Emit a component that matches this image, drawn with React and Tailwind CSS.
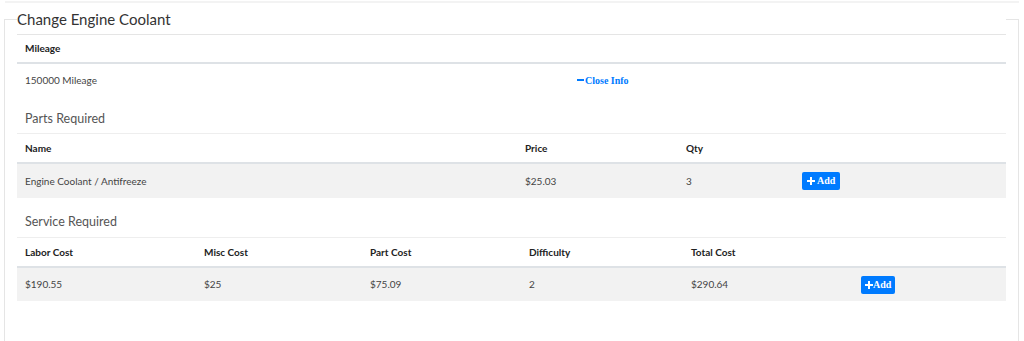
import React from 'react';

const parts = [{ name: 'Engine Coolant / Antifreeze', price: '$25.03', qty: '3' }];

const service = { labor: '$190.55', misc: '$25', part: '$75.09', difficulty: '2', total: '$290.64' };

const AddButton = ({ spaced }) => (
  <button className={`h-[18px] rounded-[2px] bg-[#007bff] text-white flex items-center font-['Liberation_Serif',serif] font-bold text-[10px] leading-none ${spaced ? 'px-[5px]' : 'px-[4px]'}`}>
    <svg width="8" height="8" viewBox="0 0 8 8" className={spaced ? 'mr-[2px]' : ''}>
      <path d="M3 0h2v3h3v2H5v3H3V5H0V3h3z" fill="currentColor" />
    </svg>
    Add
  </button>
);

const App = () => {
  return (
    <div className="bg-white h-[341px] overflow-hidden text-[10px] text-[#444] font-['Segoe_UI','Lato',sans-serif]">
      <div className="mx-[5px] mt-[1px] h-[2px] bg-[#f3f3f3]" />

      <fieldset className="ml-[4px] mr-[5px] mt-[1px] h-[400px] border border-[#e5e5e5] px-3">
        <legend className="w-full border-b border-[#e5e5e5] text-[15px] leading-[30px] text-[#333]">
          Change Engine Coolant
        </legend>

        {/* mileage */}
        <div className="grid grid-cols-[552px_1fr] h-[29px] items-center border-b-2 border-[#dee2e6] font-bold text-[#222]">
          <div className="px-2">Mileage</div>
          <div />
        </div>
        <div className="grid grid-cols-[552px_1fr] h-[33px] items-center">
          <div className="px-2">150000 Mileage</div>
          <div className="px-2 -mt-[3px]">
            <a href="#" className="inline-flex items-center text-[#007bff] font-['Liberation_Serif',serif] font-bold text-[10px]">
              <span className="inline-block w-[7px] h-[2px] bg-[#007bff] mr-[1px]" />
              Close Info
            </a>
          </div>
        </div>

        {/* parts */}
        <div className="pt-[12px] pb-[4px] px-2 border-b border-[#eee] text-[12.5px] leading-[20px] text-[#555]">
          Parts Required
        </div>
        <div className="grid grid-cols-[500px_161px_116px_1fr] h-[30px] items-center border-b-2 border-[#dee2e6] font-bold text-[#222]">
          <div className="px-2">Name</div>
          <div className="px-2">Price</div>
          <div className="px-2">Qty</div>
          <div />
        </div>
        {parts.map(p => (
          <div key={p.name} className="grid grid-cols-[500px_161px_116px_1fr] h-[34px] items-center bg-[#f2f2f2]">
            <div className="px-2">{p.name}</div>
            <div className="px-2">{p.price}</div>
            <div className="px-2">{p.qty}</div>
            <div className="px-2">
              <AddButton spaced />
            </div>
          </div>
        ))}

        {/* service */}
        <div className="pt-[14px] pb-[5px] px-2 border-b border-[#eee] text-[12.5px] leading-[20px] text-[#555]">
          Service Required
        </div>
        <div className="grid grid-cols-[179px_166px_159px_162px_170px_1fr] h-[30px] items-center border-b-2 border-[#dee2e6] font-bold text-[#222]">
          <div className="px-2">Labor Cost</div>
          <div className="px-2">Misc Cost</div>
          <div className="px-2">Part Cost</div>
          <div className="px-2">Difficulty</div>
          <div className="px-2">Total Cost</div>
          <div />
        </div>
        <div className="grid grid-cols-[179px_166px_159px_162px_170px_1fr] h-[33px] items-center bg-[#f2f2f2]">
          <div className="px-2">{service.labor}</div>
          <div className="px-2">{service.misc}</div>
          <div className="px-2">{service.part}</div>
          <div className="px-2">{service.difficulty}</div>
          <div className="px-2">{service.total}</div>
          <div className="px-2">
            <AddButton />
          </div>
        </div>
      </fieldset>
    </div>
  );
};

export default App;
